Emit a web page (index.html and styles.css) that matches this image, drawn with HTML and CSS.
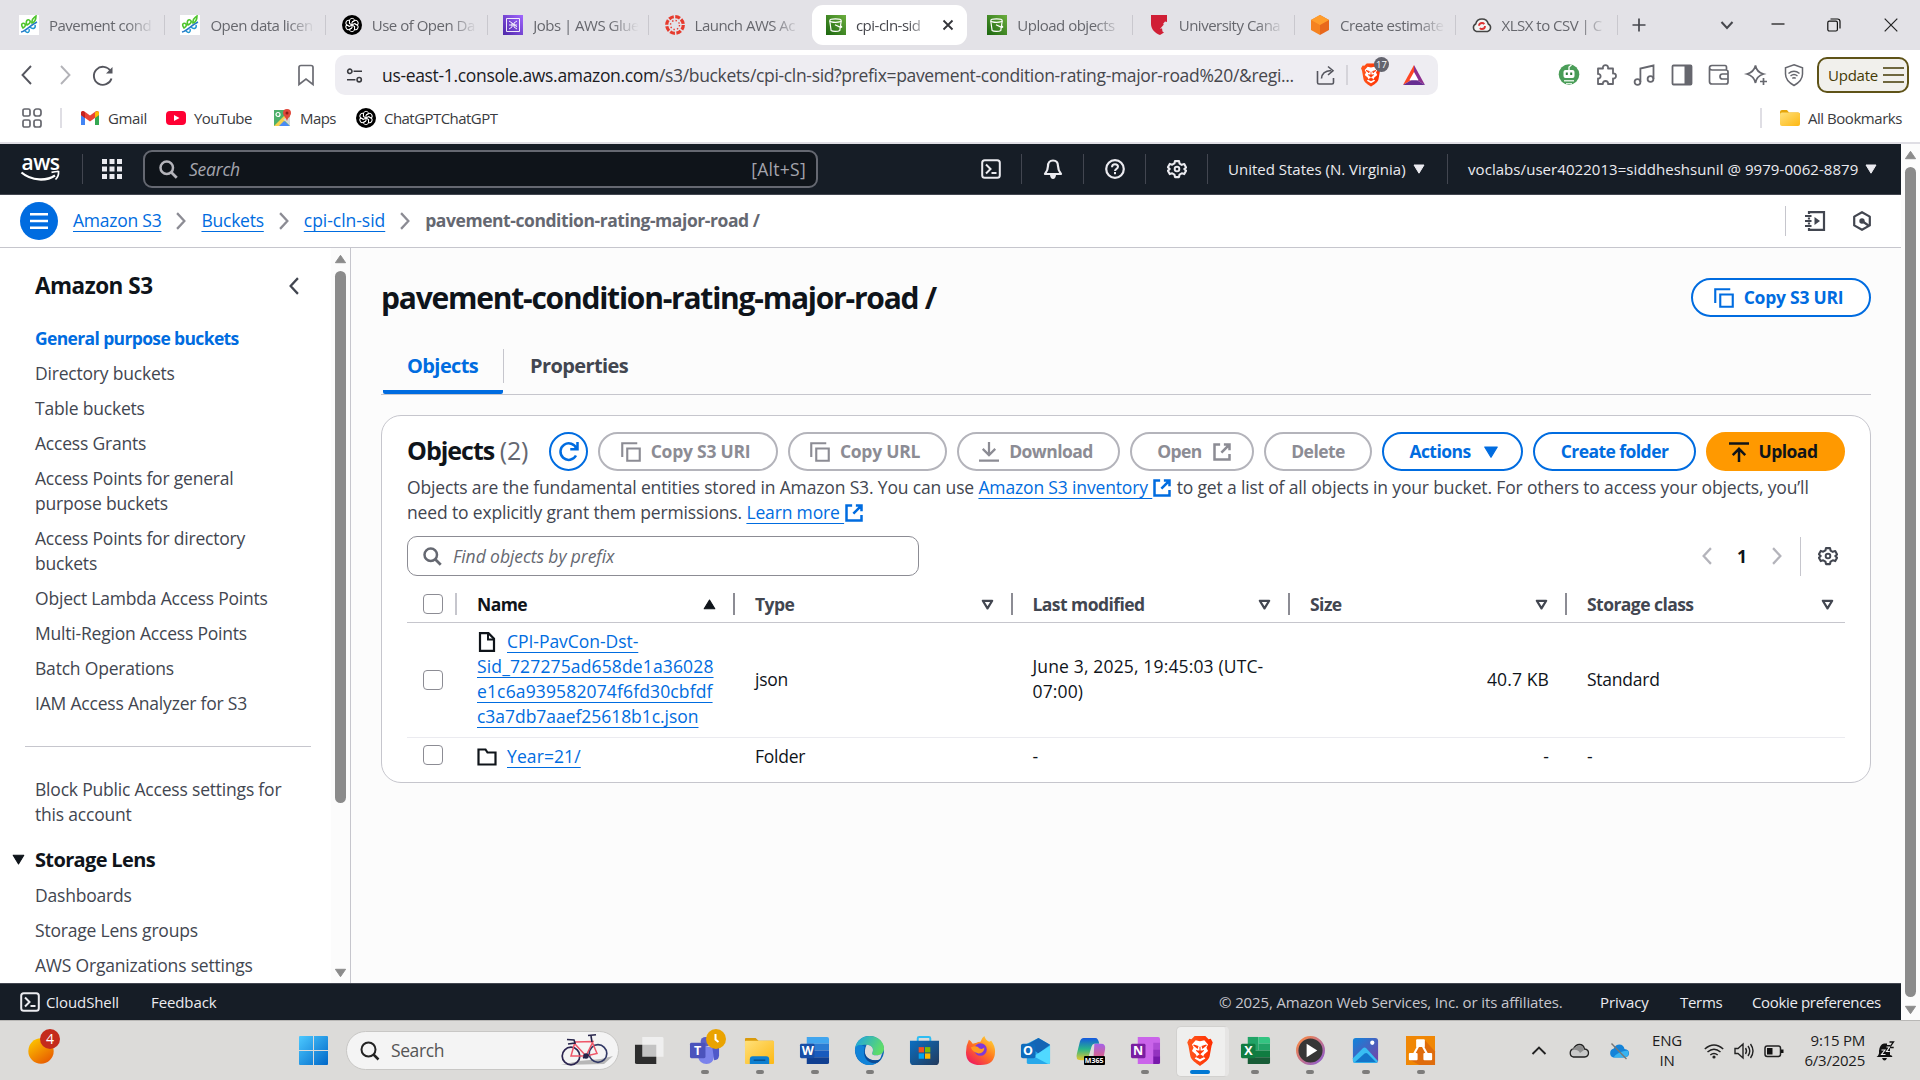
FILE: index.html
```html
<!DOCTYPE html>
<html lang="en">
<head>
<meta charset="utf-8">
<title>cpi-cln-sid - S3 bucket</title>
<link rel="stylesheet" href="styles.css">
</head>
<body>
<svg class="defs" width="0" height="0">
  <defs>
    <linearGradient id="g-green" x1="0" y1="1" x2="1" y2="0"><stop offset="0" stop-color="#1b660f"/><stop offset="1" stop-color="#6cae3e"/></linearGradient>
    <linearGradient id="g-purple" x1="0" y1="1" x2="1" y2="0"><stop offset="0" stop-color="#4d27a8"/><stop offset="1" stop-color="#a166ff"/></linearGradient>
    <linearGradient id="g-win" x1="0" y1="0" x2="1" y2="1"><stop offset="0" stop-color="#4cc9ff"/><stop offset="1" stop-color="#0067c8"/></linearGradient>
    <linearGradient id="g-sun" x1="0" y1="0" x2=".7" y2="1"><stop offset="0" stop-color="#ffd000"/><stop offset="1" stop-color="#e85c00"/></linearGradient>
    <linearGradient id="g-edge" x1="0" y1="0" x2="1" y2=".4"><stop offset="0" stop-color="#1aa0e8"/><stop offset="1" stop-color="#5fdc6a"/></linearGradient>
    <linearGradient id="g-fox" x1="1" y1="0" x2=".2" y2="1"><stop offset="0" stop-color="#ffe83a"/><stop offset=".5" stop-color="#ff7a1e"/><stop offset="1" stop-color="#f0185e"/></linearGradient>
    <linearGradient id="g-cop" x1="0" y1="0" x2="0" y2="1"><stop offset="0" stop-color="#1457e0"/><stop offset=".5" stop-color="#28b48a"/><stop offset="1" stop-color="#e8c92c"/></linearGradient>
    <linearGradient id="g-cop2" x1="0" y1="0" x2="0" y2="1"><stop offset="0" stop-color="#a561e8"/><stop offset="1" stop-color="#f5655a"/></linearGradient>
    <linearGradient id="g-bag" x1="0" y1="0" x2="1" y2="1"><stop offset="0" stop-color="#0b6fc2"/><stop offset="1" stop-color="#223a5c"/></linearGradient>
    <linearGradient id="g-folder" x1="0" y1="0" x2="1" y2="1"><stop offset="0" stop-color="#ffe07a"/><stop offset="1" stop-color="#fdb813"/></linearGradient>
    <linearGradient id="g-photo" x1="0" y1="0" x2="1" y2="1"><stop offset="0" stop-color="#0f86dc"/><stop offset="1" stop-color="#7b3fa4"/></linearGradient>
    <linearGradient id="g-ring" x1="0" y1="0" x2="1" y2="1"><stop offset="0" stop-color="#ff8a3c"/><stop offset="1" stop-color="#8a5ad6"/></linearGradient>
    <linearGradient id="g-brave" x1="0" y1="0" x2="1" y2="0"><stop offset="0" stop-color="#ff5a1f"/><stop offset="1" stop-color="#ff2d00"/></linearGradient>
  </defs>
  <symbol id="copy" viewBox="0 0 16 16"><path d="M1 12V1h12M5 5.200h10V15H5z" fill="none" stroke="currentColor" stroke-width="1.700"/></symbol>
  <symbol id="ext" viewBox="0 0 16 16"><path d="M6.500 2H2v12h12V9.500M9.500 2H14v4.500M14 2 7.500 8.500" fill="none" stroke="currentColor" stroke-width="2"/></symbol>
  <symbol id="search" viewBox="0 0 16 16"><circle cx="7" cy="7" r="5" fill="none" stroke="currentColor" stroke-width="2"/><path d="m10.600 10.600 4.400 4.400" stroke="currentColor" stroke-width="2.200"/></symbol>
  <symbol id="right" viewBox="0 0 16 16"><path d="m4.500 1 6.500 7-6.500 7" fill="none" stroke="currentColor" stroke-width="2"/></symbol>
  <symbol id="left" viewBox="0 0 16 16"><path d="M11.500 1 5 8l6.500 7" fill="none" stroke="currentColor" stroke-width="2"/></symbol>
  <symbol id="down" viewBox="0 0 16 16"><path d="M3 4h10L8 12.200z" fill="currentColor" stroke="currentColor" stroke-linejoin="round"/></symbol>
  <symbol id="up" viewBox="0 0 16 16"><path d="M3 12h10L8 3.800z" fill="currentColor" stroke="currentColor" stroke-linejoin="round"/></symbol>
  <symbol id="sort" viewBox="0 0 16 16"><path d="M3.600 4.500h8.800L8 11.700z" fill="none" stroke="currentColor" stroke-width="2.100" stroke-linejoin="round"/></symbol>
  <symbol id="gear" viewBox="0 0 24 24"><path d="M9.600 2.500h4.800l.7 3 2.600 1.500 3-.9 2.200 4-2.100 1.900 2.100 2.100-2.200 4-3-.9-2.600 1.500-.7 3H9.600l-.7-3-2.600-1.500-3 .9-2.200-4L3.200 12 1.100 9.900l2.200-4 3 .9 2.600-1.500z" fill="none" stroke="currentColor" stroke-width="2.500" stroke-linejoin="round"/><circle cx="12" cy="12" r="2.800" fill="none" stroke="currentColor" stroke-width="2.300"/></symbol>
  <symbol id="shell" viewBox="0 0 20 20"><rect x="1.200" y="1.200" width="17.600" height="17.600" rx="2.500" fill="none" stroke="currentColor" stroke-width="2"/><path d="m5 5.500 4.500 4.500L5 14.500M10.500 14h5" fill="none" stroke="currentColor" stroke-width="2"/></symbol>
  <symbol id="bucket" viewBox="0 0 20 20"><path fill="url(#g-green)" d="M0 0h20v20H0z"/><ellipse cx="9.500" cy="5.600" rx="5.700" ry="1.700" fill="none" stroke="#fff" stroke-width="1.200"/><path d="m3.800 6 1.300 9.500c1.500 1.300 7 1.300 8.700 0L15.200 6M9 9.800l5.500 2.500c1.800.3 1.400-1.100-.1-1.800" fill="none" stroke="#fff" stroke-width="1.200"/></symbol>
  <symbol id="leaf" viewBox="0 0 20 20"><path fill="#fff" d="M0 0h20v20H0z"/><path d="M2 17c5-1 8-6 16-10" fill="none" stroke="#2579c8" stroke-width="1.500"/><path d="M4 13c-3-4 0-6 2-4 1 2 0 3-2 4zM8 10C6 6 9 3 11 6c1 2-1 3-3 4zM13 8c-1-4 2-5 4-7 0 4-1 6-4 7z" fill="none" stroke="#4fc52d" stroke-width="1.600"/><path d="M6 16c3 3 5 1 4-2M11 12c3 3 6 1 5-2" fill="none" stroke="#1f95d0" stroke-width="1.500"/></symbol>
  <symbol id="gpt" viewBox="0 0 20 20"><circle cx="10" cy="10" r="10"/><g fill="none" stroke="#fff" stroke-width="1"><path id="petal" d="M7.500 8.500V5.800c0-3 4.600-3.300 5.200-.3L10 7v3"/><use href="#petal" transform="rotate(60 10 10)"/><use href="#petal" transform="rotate(120 10 10)"/><use href="#petal" transform="rotate(180 10 10)"/><use href="#petal" transform="rotate(240 10 10)"/><use href="#petal" transform="rotate(300 10 10)"/></g></symbol>
  <symbol id="lion" viewBox="0 0 24 28"><path d="m7 0-3 3-2-.5L0 6l1.200 3L3 19c1 4 5 6 9 9 4-3 8-5 9-9l1.800-10L24 6l-2-3.500-2 .5-3-3z" fill="url(#g-brave)"/><path d="M12 5 8 4 4.500 8 6 11l-1.500 3 3.500 3 1 2-2 2 5 3 5-3-2-2 1-2 3.500-3-1.500-3 1.500-3L16 4z" fill="#fff"/><path d="m6 8.500 4 1.200-.5 1.600zM18 8.500l-4 1.200.5 1.600zM12 10v5M8.500 13.500l3.500 3 3.500-3M9 19.500l3-2 3 2-3 1.500z" fill="#ff3c0a" stroke="#ff3c0a" stroke-width="1"/></symbol>
</svg>

<header class="tabstrip">
  <div class="tab"><svg class="fav"><use href="#leaf"/></svg><span class="tab-label">Pavement cond</span></div>
  <div class="tab"><svg class="fav"><use href="#leaf"/></svg><span class="tab-label">Open data licen</span></div>
  <div class="tab"><svg class="fav"><use href="#gpt"/></svg><span class="tab-label">Use of Open Da</span></div>
  <div class="tab"><svg class="fav" viewBox="0 0 20 20"><path fill="url(#g-purple)" d="M0 0h20v20H0z"/><path d="M3.500 3.500h13v13h-13zM6 6l3 2v4l-3 2M14 6l-3 2v4l3 2M9 8l5 4M6 10h8" fill="none" stroke="#fff" stroke-width=".9"/></svg><span class="tab-label">Jobs | AWS Glue</span></div>
  <div class="tab no-sep"><svg class="fav" viewBox="0 0 20 20"><circle cx="10" cy="10" r="8.300" fill="none" stroke="#e63b2e" stroke-width="3.200" stroke-dasharray="5 1.520" /><circle cx="10" cy="10" r="4.500" fill="none" stroke="#e63b2e" stroke-width="1.400" stroke-dasharray="1.400 2.134"/></svg><span class="tab-label">Launch AWS Ac</span></div>
  <div class="tab active"><svg class="fav"><use href="#bucket"/></svg><span class="tab-label">cpi-cln-sid</span><svg class="tab-close" viewBox="0 0 12 12"><path d="m1.500 1.500 9 9m0-9-9 9" stroke="#333439" stroke-width="1.800"/></svg></div>
  <div class="tab"><svg class="fav"><use href="#bucket"/></svg><span class="tab-label">Upload objects</span></div>
  <div class="tab"><svg class="fav" viewBox="0 0 20 20"><path d="M2 0h16v7l-2-.5-2 2.500 1.500 1-2.500 3 .5 3.500 1.500 1-4 2.500C6 18 2 14 2 9z" fill="#d01f36"/><path d="m11 14 6-7 2 4z" fill="#e3e2e7"/></svg><span class="tab-label">University Cana</span></div>
  <div class="tab"><svg class="fav" viewBox="0 0 20 20"><path d="M10 0 1 5v10l9 5z" fill="#f58220"/><path d="m10 0 9 5v10l-9 5z" fill="#e8681c"/><path d="m10 0 9 5-9 5-9-5z" fill="#ff9d2c"/></svg><span class="tab-label">Create estimate</span></div>
  <div class="tab"><svg class="fav" viewBox="0 0 20 20"><path d="M4.500 16.500a4 4 0 0 1-.8-7.500 6.500 6.500 0 0 1 12.600 0 4 4 0 0 1-.8 7.500z" fill="#f4f4f4" stroke="#444" stroke-width="1.500"/><circle cx="10" cy="11" r="3" fill="none" stroke="#d33" stroke-width="1.800" stroke-dasharray="7 2.400"/></svg><span class="tab-label">XLSX to CSV | C</span></div>
  <svg class="newtab" viewBox="0 0 14 14"><path d="M7 .5v13M.5 7h13" stroke="#46474d" stroke-width="1.700"/></svg>
  <div class="winctl">
    <svg class="w14" viewBox="0 0 14 14"><path d="m1.500 4 5.500 6 5.500-6" fill="none" stroke="#46474d" stroke-width="2"/></svg>
    <svg class="w14" viewBox="0 0 14 14"><path d="M.5 6h13" stroke="#111" stroke-width="1.200"/></svg>
    <svg class="w14" viewBox="0 0 14 14"><rect x=".8" y="3.200" width="9.600" height="9.800" rx="1.500" fill="none" stroke="#111" stroke-width="1.200"/><path d="M3.500 1h7c1.600 0 2.500 1 2.500 2.500v7" fill="none" stroke="#111" stroke-width="1.200"/></svg>
    <svg class="w14" viewBox="0 0 14 14"><path d="m.7.7 12.600 12.600m0-12.600L.7 13.300" stroke="#222" stroke-width="1.200"/></svg>
  </div>
</header>

<div class="toolbar">
  <div class="nav">
    <svg viewBox="0 0 22 22"><path d="m15 2-8.500 9 8.500 9" fill="none" stroke="#55565e" stroke-width="1.900"/></svg>
    <svg viewBox="0 0 22 22"><path d="m7 2 8.500 9L7 20" fill="none" stroke="#b3b3b8" stroke-width="1.900"/></svg>
    <svg viewBox="0 0 22 22"><path d="M18.500 7A9 9 0 1 0 19.500 14.500" fill="none" stroke="#55565e" stroke-width="1.900"/><path d="M20.500 3v6.500H14z" fill="#55565e"/></svg>
    <svg class="bm" viewBox="0 0 22 22"><path d="M4 3.500Q4 1.500 6 1.500h10q2 0 2 2v17l-7-5.500-7 5.500z" fill="none" stroke="#6b6c73" stroke-width="1.700"/></svg>
  </div>
  <div class="omni">
    <svg class="tune" viewBox="0 0 18 16"><g fill="none" stroke="#3a3b40" stroke-width="1.700"><circle cx="4" cy="3.500" r="2.300"/><circle cx="14" cy="12.500" r="2.300"/><path d="M8 3.500h9M1 12.500h9"/></g></svg>
    <span class="url"><b>us-east-1.console.aws.amazon.com</b>/s3/buckets/cpi-cln-sid?prefix=pavement-condition-rating-major-road%20/&amp;regi...</span>
    <svg class="share" viewBox="0 0 20 20"><path d="M1.500 6v11.500q0 1.500 1.500 1.500h13q1.500 0 1.500-1.500V13M5.500 13.500Q6 6 15 5.500M12 1.500l5 4.200-5 4.300" fill="none" stroke="#55565e" stroke-width="1.600"/></svg>
    <i class="omni-sep"></i>
    <span class="shield"><svg viewBox="0 0 24 28"><use href="#lion"/></svg><em>17</em></span>
    <svg class="bat" viewBox="0 0 22 20"><path d="M11 0 0 20l11-6.500z" fill="#ff4724"/><path d="m11 0 11 20-11-6.500z" fill="#8d2f8e"/><path d="M0 20h22l-11-6.500z" fill="#662d91"/><path d="m11 7 4.600 8.300H6.400z" fill="#fff"/></svg>
  </div>
  <div class="ext">
    <svg viewBox="0 0 22 22"><circle cx="11" cy="10.500" r="10.300" fill="#4a9d58"/><path d="M11 6V3l2.500-2" stroke="#fff" stroke-width="1.300" fill="none"/><rect x="5.500" y="6" width="11" height="8" rx="2" fill="#fff"/><path d="M7.800 8.500h2v2.500h-2zM12.200 8.500h2v2.500h-2z" fill="#2e7d3c"/><path d="M6 16h10v1.500H6zM8 19h6v1H8z" fill="#d9eedc"/></svg>
    <svg viewBox="0 0 22 22"><path d="M3 4.500h5c-1-4.500 6-4.500 5 0h5v5c4-.8 4 5.500 0 5V20h-5c1-4-6-4-5 0H3v-5.500c3.500.5 3.500-5 0-4.500z" fill="none" stroke="#66676e" stroke-width="1.800" stroke-linejoin="round"/></svg>
    <svg viewBox="0 0 22 22"><g fill="none" stroke="#66676e" stroke-width="1.800"><circle cx="4.500" cy="18" r="2.900"/><circle cx="17.500" cy="15" r="2.900"/><path d="M7.400 18V4.500L20.500 1.500V15"/></g></svg>
    <svg viewBox="0 0 22 22"><rect x="1.500" y="1.500" width="19" height="19" rx="1" fill="none" stroke="#66676e" stroke-width="1.800"/><path d="M13.500 1.500h7v19h-7z" fill="#66676e"/></svg>
    <svg viewBox="0 0 22 22"><path d="M1.500 4v13.500q0 2.500 2.500 2.500h14q2 0 2-2V8q0-2-2-2H4Q1.500 6 1.500 3.800T4 1.500h13q1.500 0 1.500 2V6M20 10h-5.500q-2.500 0-2.500 2.500t2.500 2.500H20" fill="none" stroke="#66676e" stroke-width="1.700"/></svg>
    <svg viewBox="0 0 22 22"><path d="M9.500 1.500q1 6.500 8 8.500-7 2-8 9-1.500-7-8.500-9 7-2 8.500-8.500zM17.500 14v7M14 17.500h7" fill="none" stroke="#66676e" stroke-width="1.700"/></svg>
    <svg viewBox="0 0 22 22"><path d="m11 .8 8.500 3V10c0 6-4 9-8.500 11.500C6.500 19 2.500 16 2.500 10V3.800z" fill="none" stroke="#66676e" stroke-width="1.500"/><path d="M5.500 9.500q5.500-4.500 11 0M7.500 12q3.500-2.800 7 0M9.300 14.300q1.700-1.200 3.400 0" fill="none" stroke="#66676e" stroke-width="1.500"/></svg>
  </div>
  <button class="update">Update<svg viewBox="0 0 21 16"><path d="M0 1h21M0 8h21M0 15h21" stroke="#443a05" stroke-width="1.700"/></svg></button>
</div>

<div class="bookmarks">
  <svg class="apps" viewBox="0 0 20 20"><g fill="none" stroke="#66676e" stroke-width="1.700"><rect x="1" y="1" width="7" height="7" rx="1.600"/><rect x="12" y="1" width="7" height="7" rx="2.500"/><rect x="1" y="12" width="7" height="7" rx="1.600"/><rect x="12" y="12" width="7" height="7" rx="2"/></g></svg>
  <i class="bsep"></i>
  <a class="bk gmail"><svg viewBox="0 0 20 20"><path d="M1 17V5l4 3v9z" fill="#4285f4"/><path d="M15 17V8l4-3v12z" fill="#34a853"/><path d="M1 5c0-2 2-2.500 3.500-1.500L10 7.500l5.500-4C17 2.500 19 3 19 5v2l-9 6.500L1 7z" fill="#ea4335"/><path d="M1 7V5c0-1 .8-2 2-2l2 1.500V10z" fill="#c5221f"/><path d="M15 10V4.500L17 3c1 0 2 1 2 2v2z" fill="#fbbc04"/></svg>Gmail</a>
  <a class="bk yt"><svg viewBox="0 0 20 20"><rect y="3" width="20" height="14" rx="4" fill="#f03"/><path d="m8 7 5.500 3L8 13z" fill="#fff"/></svg>YouTube</a>
  <a class="bk maps"><svg viewBox="0 0 20 20"><path d="M2 2h16v16H2z" fill="#4caf6a"/><path d="M2 18 15 5h3v3L8 18z" fill="#f6d04d"/><path d="M7 18l5-5 6 5z" fill="#4a8af4"/><path d="m11 11 7 7V9z" fill="#d8d8d8"/><path d="M15 1a4 4 0 0 1 4 4c0 3-3 4-4 8-1-4-4-5-4-8a4 4 0 0 1 4-4z" fill="#e1483b"/><circle cx="15" cy="5" r="1.500" fill="#8b1f17"/><circle cx="6" cy="6.500" r="2" fill="none" stroke="#fff" stroke-width="1.200"/></svg>Maps</a>
  <a class="bk"><svg><use href="#gpt"/></svg>ChatGPTChatGPT</a>
  <a class="bk all"><i class="bsep"></i><svg viewBox="0 0 20 20"><path d="M0 4q0-2 2-2h5l2 2.500h9q2 0 2 2V10H0z" fill="#e5a50a"/><rect y="4.500" width="20" height="13.500" rx="2" fill="url(#g-folder)"/></svg>All Bookmarks</a>
</div>

<div class="viewport">
  <div class="console">
    <div class="awsbar">
      <div class="logo"><span>aws</span><svg viewBox="0 0 39 12"><path d="M.5 2.500C11 11.500 26 11 34 5.500" fill="none" stroke="#fff" stroke-width="2.300"/><path d="M30.500 2.300q8-1.500 7-.3.500 4-3 7.500" fill="none" stroke="#fff" stroke-width="1.700"/></svg></div>
      <i class="vsep"></i>
      <svg class="grid9" viewBox="0 0 20 20"><path d="M0 0h5v5H0zM7.500 0h5v5h-5zM15 0h5v5h-5zM0 7.500h5v5H0zM7.500 7.500h5v5h-5zM15 7.500h5v5h-5zM0 15h5v5H0zM7.500 15h5v5h-5zM15 15h5v5h-5z" fill="#ebebf0"/></svg>
      <div class="gsearch"><svg><use href="#search"/></svg><em>Search</em><span>[Alt+S]</span></div>
      <div class="aws-icons">
        <span><svg><use href="#shell"/></svg></span><i class="vsep"></i>
        <span><svg viewBox="0 0 20 20"><path d="M10 1.500c3.500 0 5 2.500 5 5.500 0 4 1 5.500 3 8H2c2-2.500 3-4 3-8 0-3 1.500-5.500 5-5.500z" fill="none" stroke="currentColor" stroke-width="2.200" stroke-linejoin="round"/><path d="M7 16h6q-.5 4-3 4t-3-4z" fill="currentColor"/></svg></span><i class="vsep"></i>
        <span><svg viewBox="0 0 20 20"><circle cx="10" cy="10" r="8.800" fill="none" stroke="currentColor" stroke-width="2.200"/><path d="M7 8.300q0-3 3-3t3 2.500c0 2.200-3 2-3 4.200M10 13v2.300" fill="none" stroke="currentColor" stroke-width="2"/></svg></span><i class="vsep"></i>
        <span><svg><use href="#gear"/></svg></span><i class="vsep"></i>
      </div>
      <div class="region">United States (N. Virginia)<svg><use href="#down"/></svg></div>
      <i class="vsep"></i>
      <div class="account">voclabs/user4022013=siddheshsunil @ 9979-0062-8879<svg><use href="#down"/></svg></div>
    </div>

    <nav class="crumbs">
      <span class="burger"><svg viewBox="0 0 18 16"><path d="M0 1.200h18M0 8h18M0 14.800h18" stroke="#fff" stroke-width="2.400"/></svg></span>
      <a class="link">Amazon S3</a><svg class="chev"><use href="#right"/></svg>
      <a class="link">Buckets</a><svg class="chev"><use href="#right"/></svg>
      <a class="link bucket-name">cpi-cln-sid</a><svg class="chev"><use href="#right"/></svg>
      <b>pavement-condition-rating-major-road /</b>
      <div class="crumb-tools"><i></i>
        <svg viewBox="0 0 20 20"><path d="M4 3V1.200h15v17.600H4V17M4 6.500v2M4 11.500v2" fill="none" stroke="currentColor" stroke-width="2.200"/><path d="M0 5h6.500M0 10h6.500M0 15h6.500" stroke="currentColor" stroke-width="2"/><path d="m9.500 6 5.500 4-5.500 4z" fill="currentColor"/></svg>
        <svg viewBox="0 0 20 20"><path d="m10 1.200 7.800 4.400v8.800L10 18.800l-7.800-4.400V5.600z" fill="none" stroke="currentColor" stroke-width="2.200" stroke-linejoin="round"/><circle cx="10" cy="10" r="2.700" fill="currentColor"/><path d="m10 10 6.500 4.500" stroke="currentColor" stroke-width="2.200"/></svg>
      </div>
    </nav>

    <div class="body">
      <aside class="side">
        <div class="side-list">
          <div class="side-head"><h2>Amazon S3</h2><svg><use href="#left"/></svg></div>
          <ul>
            <li class="on">General purpose buckets</li>
            <li>Directory buckets</li>
            <li>Table buckets</li>
            <li>Access Grants</li>
            <li>Access Points for general<br>purpose buckets</li>
            <li>Access Points for directory<br>buckets</li>
            <li>Object Lambda Access Points</li>
            <li>Multi-Region Access Points</li>
            <li>Batch Operations</li>
            <li>IAM Access Analyzer for S3</li>
          </ul>
          <hr>
          <ul class="ul2"><li>Block Public Access settings for<br>this account</li></ul>
          <h3><svg><use href="#down"/></svg>Storage Lens</h3>
          <ul class="ul3">
            <li>Dashboards</li>
            <li>Storage Lens groups</li>
            <li>AWS Organizations settings</li>
          </ul>
        </div>
        <div class="sbar"><svg viewBox="0 0 14 10"><path d="m7 1 5.500 8h-11z" fill="#8b8b8b" stroke="#8b8b8b" stroke-linejoin="round"/></svg><i class="side-thumb"></i><svg viewBox="0 0 14 10"><path d="m7 9 5.500-8h-11z" fill="#8b8b8b" stroke="#8b8b8b" stroke-linejoin="round"/></svg></div>
      </aside>

      <main class="main">
        <div class="title"><h1>pavement-condition-rating-major-road /</h1><button class="btn lead wide w180"><svg><use href="#copy"/></svg>Copy S3 URI</button></div>
        <div class="tabs"><span class="t on">Objects</span><i></i><span class="t">Properties</span></div>
        <section class="card">
          <div class="actions">
            <h2>Objects <small>(2)</small></h2>
            <button class="btn round"><svg viewBox="0 0 16 16"><path d="M13.600 10.800A6.600 6.600 0 1 1 14 5.500M14.800 0v5.800H9" fill="none" stroke="currentColor" stroke-width="2"/></svg></button>
            <button class="btn off lead wide w180"><svg><use href="#copy"/></svg>Copy S3 URI</button>
            <button class="btn off lead wide w159"><svg><use href="#copy"/></svg>Copy URL</button>
            <button class="btn off lead w163"><svg viewBox="0 0 16 16"><path d="M8 0v10.500M3 5.500l5 5 5-5M0 14.800h16" fill="none" stroke="currentColor" stroke-width="1.800"/></svg>Download</button>
            <button class="btn off trail w124">Open<svg><use href="#ext"/></svg></button>
            <button class="btn off w108">Delete</button>
            <button class="btn trail w141">Actions<svg><use href="#down"/></svg></button>
            <button class="btn w163">Create folder</button>
            <button class="btn lead primary w139"><svg viewBox="0 0 16 16"><path d="M0 1.200h16M8 16V5.500M3 10.500l5-5 5 5" fill="none" stroke="currentColor" stroke-width="2"/></svg>Upload</button>
          </div>
          <p class="desc">Objects are the fundamental entities stored in Amazon S3. You can use <a class="link">Amazon S3 inventory </a><svg><use href="#ext"/></svg> to get a list of all objects in your bucket. For others to access your objects, you’ll<br>need to explicitly grant them permissions. <a class="link">Learn more </a><svg><use href="#ext"/></svg></p>
          <div class="filter">
            <div class="find"><svg><use href="#search"/></svg><em>Find objects by prefix</em></div>
            <div class="pager"><svg><use href="#left"/></svg><b>1</b><svg><use href="#right"/></svg><i></i><svg class="prefs"><use href="#gear"/></svg></div>
          </div>
          <div class="table">
            <div class="tr th">
              <div class="c chk"><i class="box"></i></div>
              <div class="c sorted">Name<svg><use href="#up"/></svg></div>
              <div class="c">Type<svg><use href="#sort"/></svg></div>
              <div class="c">Last modified<svg><use href="#sort"/></svg></div>
              <div class="c">Size<svg><use href="#sort"/></svg></div>
              <div class="c last">Storage class<svg><use href="#sort"/></svg></div>
            </div>
            <div class="tr r1">
              <div class="c chk"><i class="box"></i></div>
              <div class="c"><div class="name"><svg class="ico" viewBox="0 0 20 20"><path d="M3 1.200h8.500L17 6.700v12.100H3z" fill="none" stroke="#0f141a" stroke-width="2.200"/><path d="M11 1v6.500h6" fill="none" stroke="#0f141a" stroke-width="2"/></svg><a class="link">CPI-PavCon-Dst-<br><span class="hash">Sid_727275ad658de1a36028<br>e1c6a939582074f6fd30cbfdf</span><br>c3a7db7aaef25618b1c.json</a></div></div>
              <div class="c">json</div>
              <div class="c date">June 3, 2025, 19:45:03 (UTC-<br>07:00)</div>
              <div class="c num">40.7 KB</div>
              <div class="c">Standard</div>
            </div>
            <div class="tr r2">
              <div class="c chk"><i class="box"></i></div>
              <div class="c"><div class="name"><svg class="ico" viewBox="0 0 20 20"><path d="M1.500 2.500h7l2 3h8v12h-17z" fill="none" stroke="#0f141a" stroke-width="2.200"/></svg><a class="link year">Year=21/</a></div></div>
              <div class="c">Folder</div>
              <div class="c">-</div>
              <div class="c num">-</div>
              <div class="c">-</div>
            </div>
          </div>
        </section>
      </main>
    </div>

    <footer class="foot">
      <svg><use href="#shell"/></svg><span class="f1">CloudShell</span><span>Feedback</span>
      <span class="copyr">© 2025, Amazon Web Services, Inc. or its affiliates.</span><span class="f2">Privacy</span><span class="f3">Terms</span><span class="f4">Cookie preferences</span>
    </footer>
  </div>
  <div class="sbar page"><svg viewBox="0 0 14 10"><path d="m7 1 5.500 8h-11z" fill="#8b8b8b" stroke="#8b8b8b" stroke-linejoin="round"/></svg><i class="page-thumb"></i><svg viewBox="0 0 14 10"><path d="m7 9 5.500-8h-11z" fill="#8b8b8b" stroke="#8b8b8b" stroke-linejoin="round"/></svg></div>
</div>

<div class="taskbar">
  <div class="widgets"><svg viewBox="0 0 26 26"><circle cx="13" cy="13" r="12.700" fill="url(#g-sun)"/></svg><em>4</em></div>
  <svg class="win" viewBox="0 0 29 29"><path d="M1 0h13v14H0V1q0-1 1-1zM15 0h13q1 0 1 1v13H15zM0 15h14v14H1q-1 0-1-1zM15 15h14v13q0 1-1 1H15z" fill="url(#g-win)"/></svg>
  <div class="wsearch"><svg class="mag" viewBox="0 0 20 20"><circle cx="8.500" cy="8.500" r="7" fill="none" stroke="#222" stroke-width="2"/><path d="m13.500 13.500 5 5" stroke="#222" stroke-width="2.500"/></svg><span>Search</span>
    <svg class="bike" viewBox="0 0 52 34"><path d="m0 31 18-4 22-2 12-3-9 8z" fill="#9c9c9c" opacity=".7"/><g fill="none"><circle cx="10" cy="22" r="8.800" stroke="#2b2450" stroke-width="1.700"/><circle cx="37" cy="19.500" r="8.800" stroke="#333a66" stroke-width="1.700"/><path d="m10 22 4-14 18-.5L25 22zm4-12 11 12 11-2.500-5-12" stroke="#ef5668" stroke-width="1.500"/><path d="M6 5.500 13 6l1 3-7 1M27 1.500l8-.8M30 2l1 6M22 24l6-3" stroke="#26244a" stroke-width="1.600"/></g><circle cx="25" cy="22" r="2.800" fill="#26244a"/></svg></div>
  <div class="pins">
    <span><svg viewBox="0 0 32 32"><path d="M1 10h22v20H3q-2 0-2-2z" fill="#2d2d2d"/><path d="M8.500 2H29q1.500 0 1.500 1.500v19H8.500z" fill="#f6f6f6" opacity=".75"/></svg></span>
    <span class="run teams"><svg viewBox="0 0 32 32"><circle cx="17" cy="7" r="5" fill="#5b5fc7"/><path d="M9 12h17v10q-1 8-8 8t-9-8z" fill="#7b83eb"/><path d="M24 12h7v9q0 5-5 5z" fill="#5059c9"/><rect x="1" y="8" width="16" height="16" rx="1.500" fill="#4b53bc"/></svg><b>T</b><em><svg viewBox="0 0 20 20"><circle cx="10" cy="10" r="10" fill="#eaa300"/><path d="M9.500 5v5.500l3 2.500" fill="none" stroke="#fff" stroke-width="2"/></svg></em></span>
    <span class="run"><svg viewBox="0 0 32 32"><path d="M1 4q0-1 1-1h10l3 3h15v6H1z" fill="#d99a0b"/><rect x="1" y="6" width="30" height="24" rx="1" fill="url(#g-folder)"/><path d="M6 30v-5q0-3 3-3h14q3 0 3 3v5z" fill="#0d7fd0"/><path d="M10 26h12" stroke="#064f8e" stroke-width="1.500"/></svg></span>
    <span class="run word"><svg viewBox="0 0 32 32"><path d="M8 2h21q2 0 2 2v5H8z" fill="#41a5ee"/><path d="M8 9h23v7H8z" fill="#2b7cd3"/><path d="M8 16h23v7H8z" fill="#185abd"/><path d="M8 23h23v5q0 2-2 2H8z" fill="#103f91"/><rect x="1" y="9" width="15" height="15" rx="1.500" fill="#174ea6"/></svg><b>W</b></span>
    <span class="run"><svg viewBox="0 0 32 32"><circle cx="16" cy="16" r="15" fill="#0b63b6"/><path d="M1 15C2 5 9 1 16 1c9 0 15 6 15 13 0 5-4 7-8 7-3 0-5-1-4-3 2-4-1-8-6-8-6 0-11 2-12 5z" fill="url(#g-edge)"/><path d="M13 10c5 0 8 4 6 8-1 2 1 3 4 3 2 0 5-.6 6.500-3-2 3-1 10-9.500 9C12 26 9 18 13 10z" fill="#dcdbd9"/><path d="M11 12c-3 8 3 17 17 13-3 4-8 6-12 6C7 31 2 24 1 16c0-6 6-7 10-4z" fill="#1183d8"/><path d="M11 13c-2 9 6 16 17 12l-3 3c-9 4-17-4-14-15z" fill="#0a4a94"/></svg></span>
    <span><svg viewBox="0 0 32 32"><path d="M9 7V3.500Q9 2 10.500 2h10Q22 2 22 3.500V7" fill="none" stroke="#2fbdf2" stroke-width="2"/><path d="M1 6h30v21q0 4-4 4H5q-4 0-4-4z" fill="url(#g-bag)"/><path d="M10 12.500h5.500V18H10z" fill="#f25022"/><path d="M16.500 12.500H22V18h-5.500z" fill="#7fba00"/><path d="M10 19h5.500v5.500H10z" fill="#00a4ef"/><path d="M16.500 19H22v5.500h-5.500z" fill="#ffb900"/></svg></span>
    <span><svg viewBox="0 0 32 32"><path d="M4 5q2 1 4 4l4-1q1-1 4-1 1-4 4-6 1 4 5 6l2-1q4 5 4 11 0 14-15 14T1 18Q1 11 4 5z" fill="url(#g-fox)"/><circle cx="16" cy="15" r="6.500" fill="#8038d8"/><path d="M6 13q6-3 9 1 3 1 5-1 0 6-6 6-6-1-8-6z" fill="#ff9a1f"/></svg></span>
    <span class="outlook"><svg viewBox="0 0 32 32"><path d="M7 9 19 3l12 7v18q0 2-2 2H9q-2 0-2-2z" fill="#28a8ea"/><path d="M7 10 19 3l12 7-12 9z" fill="#1465b5"/><path d="m31 11-17 11 15 8q2 0 2-2z" fill="#50d9ff"/><rect x="1" y="9" width="15" height="15" rx="2" fill="#0f6cbd"/></svg><b>O</b></span>
    <span class="copilot"><svg viewBox="0 0 32 32"><path d="M9 3h12q3 0 4 6h-5q-2 0-3 3l-4 14H6q-6 0-4-7L5 7q1-4 4-4z" fill="url(#g-cop)"/><path d="M20 9h7q5 0 4 6l-2 11q-1 4-5 4h-9q3-1 4-5z" fill="url(#g-cop2)"/></svg><em>M365</em></span>
    <span class="run note"><svg viewBox="0 0 32 32"><path d="M8 2h21q2 0 2 2v24q0 2-2 2H8z" fill="#ca64ea"/><path d="M24 8h7v7h-7z" fill="#ae4bd5"/><path d="M24 15h7v7h-7z" fill="#9332bf"/><path d="M24 22h7v6q0 2-2 2h-5z" fill="#7719aa"/><rect x="1" y="9" width="15" height="15" rx="1.500" fill="#7a1ea1"/></svg><b>N</b></span>
    <span class="run current"><svg viewBox="0 0 24 28"><use href="#lion"/></svg></span>
    <span class="run xl"><svg viewBox="0 0 32 32"><path d="M8 2h11v14H8z" fill="#21a366"/><path d="M19 2h10q2 0 2 2v5H19z" fill="#33c481"/><path d="M19 9h12v7H19z" fill="#21a366"/><path d="M8 16h23v7H8z" fill="#107c41"/><path d="M8 23h23v5q0 2-2 2H8z" fill="#185c37"/><rect x="1" y="9" width="15" height="15" rx="1.500" fill="#107c41"/></svg><b>X</b></span>
    <span class="run"><svg viewBox="0 0 32 32"><circle cx="16" cy="16" r="13.700" fill="#363636" stroke="url(#g-ring)" stroke-width="2.500"/><path d="m12 9 11 7-11 7z" fill="#fff"/></svg></span>
    <span class="run"><svg viewBox="0 0 32 32"><rect x="3" y="3" width="26" height="26" rx="3" fill="url(#g-photo)"/><path d="m3 24 10-10q2-2 4 0l12 13q-1 2-3 2H6q-3 0-3-3z" fill="#38bdf2"/><path d="m5 28 10-9q2-1 3 0l9 9z" fill="#1375c9"/><circle cx="23" cy="8" r="2.200" fill="#fff"/></svg></span>
    <span class="run"><svg viewBox="0 0 32 32"><path d="M1 1h30v30H1z" fill="#f08705"/><path d="m20 5 11 12v14H15L4 25z" fill="#df6c0c"/><path d="m15 9-7 13m9-13 7 13" stroke="#fff" stroke-width="2.200"/><rect x="11.500" y="4.500" width="9" height="8" rx="1" fill="#fff"/><rect x="4" y="18.500" width="9" height="7.500" rx="1" fill="#fff"/><rect x="19" y="18.500" width="9" height="7.500" rx="1" fill="#fff"/></svg></span>
  </div>
  <div class="tray">
    <span class="s40"><svg viewBox="0 0 20 20"><path d="m3.500 13 6.500-6.500 6.500 6.500" fill="none" stroke="#222" stroke-width="1.900"/></svg></span>
    <span class="s40"><svg viewBox="0 0 20 20"><path d="M4.500 16a4.200 4.200 0 0 1 0-8.200Q6.500 3.500 10.500 3.500q4 0 5 4.500 4 .5 4 4t-4 4z" fill="#c9c9c9" stroke="#222" stroke-width="1.300"/><path d="M3 9q6-1 8 3l4-3q-1-5-5-4.500Q6 5 3 9z" fill="#8c8c8c"/></svg></span>
    <span class="s40"><svg viewBox="0 0 20 20"><path d="M4.500 16.500a4.500 4.500 0 0 1 0-8.700Q6.500 3.500 10.500 3.500q4 0 5 4.500 4.500.5 4.500 4.300t-4.500 4.200z" fill="#1583d8"/><path d="M4.500 16.500Q9 10 19 9.500q2 6-3.500 7z" fill="#38b3f0"/><path d="m2.500 2.500 15 15.500" stroke="#777" stroke-width="1.400"/></svg></span>
    <div class="lang">ENG<br>IN</div>
    <span class="s30"><svg viewBox="0 0 20 20"><g fill="none" stroke="#222" stroke-width="1.500"><path d="M.8 8q9.200-8 18.400 0M3.500 11q6.500-5.500 13 0M6.300 14q3.700-3 7.400 0"/></g><circle cx="10" cy="16" r="1.600" fill="#222"/></svg></span>
    <span class="s30"><svg viewBox="0 0 20 20"><path d="M1 7.500h3L9 3v14l-5-4.500H1zM11.500 7q2 3 0 6M14 5q3.500 5 0 10M16.500 3q5 7 0 14" fill="none" stroke="#222" stroke-width="1.400"/></svg></span>
    <span class="s30"><svg viewBox="0 0 20 20"><rect x="1" y="5" width="15.500" height="10.500" rx="2.200" fill="none" stroke="#222" stroke-width="1.500"/><path d="M3 7h5.500v6.500H3zM17 8.500h2.500v3.500H17z" fill="#111"/></svg></span>
    <div class="clock">9:15 PM<br>6/3/2025</div>
    <span class="s40"><svg viewBox="0 0 20 20"><path d="M1.500 16q3-2 2.500-6Q4.500 3.500 9 2.500h3V4h3v10q2 0 2.500 2zM7 17h5q-1 2.500-2.500 2.500T7 17z" fill="#111"/><path d="M14.500 1h4l-4 5.500h4.200" fill="none" stroke="#111" stroke-width="1.300"/><path d="M6.500 9h3.500l-3.500 4.500h4M11.500 6h3l-3 4.500h3.300" fill="none" stroke="#eee" stroke-width="1.100"/></svg></span>
  </div>
</div>
</body>
</html>
```
FILE: styles.css
```css
* { box-sizing: border-box; }
html, body { margin: 0; height: 1080px; overflow: hidden; }
body {
  width: 1920px;
  display: flex;
  flex-direction: column;
  background: #fff;
  font-family: "Open Sans", "Noto Sans", sans-serif;
  font-size: 17.5px;
  line-height: 25px;
  letter-spacing: -0.24px;
  color: #0f141a;
}
.defs { display: block; width: 0; height: 0; flex: none; position: absolute; }
h1, h2, h3, p, ul { margin: 0; padding: 0; }
ul { list-style: none; }
svg { display: block; flex: none; overflow: visible; }
i, em { font-style: normal; }
button { font: inherit; letter-spacing: inherit; padding: 0; }

/* Browser tabs */
.tabstrip { height: 50px; flex: none; display: flex; align-items: center; background: #e3e2e7; padding-left: 3.600px; }
.tab { width: 161.400px; height: 40px; flex: none; display: flex; align-items: center; padding-left: 15.400px; font-size: 15px; letter-spacing: -0.500px; color: #66676d; }
.tab::after { content: ""; width: 1px; height: 20px; background: #c9c8ce; }
.tab.no-sep::after, .tab.active::after { display: none; }
.fav { width: 20px; height: 20px; margin-right: 10px; }
.tab-label { width: 110px; margin-right: 5px; white-space: nowrap; -webkit-mask-image: linear-gradient(90deg, #000 70%, transparent 96%); mask-image: linear-gradient(90deg, #000 70%, transparent 96%); }
.tab.active { width: 155px; margin: 0 5px 0 1.400px; padding-left: 14px; background: #fff; border-radius: 11px; color: #46474d; }
.tab.active .tab-label { width: 80px; margin-right: 6px; -webkit-mask-image: linear-gradient(90deg, #000 64%, transparent 94%); mask-image: linear-gradient(90deg, #000 64%, transparent 94%); }
.tab-close { width: 12px; height: 12px; }
.newtab { width: 14px; height: 14px; margin-left: 14px; }
.winctl { margin-left: auto; display: flex; width: 214px; }
.w14 { width: 14px; height: 14px; margin-left: 41.500px; }
.w14:first-child { margin-left: 14px; }
.w14:nth-child(2) { margin-left: 37px; }
.w14:nth-child(4) { margin-left: 43px; }

/* Address bar */
.toolbar { height: 50px; flex: none; display: flex; align-items: center; background: #fff; }
.nav { width: 335px; display: flex; padding: 0 10px 0 8px; }
.nav svg { width: 22px; height: 22px; margin: 0 8px; }
.nav .bm { margin-left: auto; }
.omni { width: 1103px; height: 40px; display: flex; align-items: center; background: #eeedf2; border-radius: 10px; padding-left: 11px; }
.tune { width: 17px; height: 15px; }
.url { width: 929px; margin-left: 19px; white-space: nowrap; color: #46474d; letter-spacing: -0.330px; line-height: 24px; }
.url b { font-weight: 400; color: #1b1b1f; }
.share { width: 20px; height: 20px; margin-left: 5px; }
.omni-sep { width: 2px; height: 20px; background: #d5d4da; margin-left: 10px; }
.shield { position: relative; margin-left: 13px; }
.shield svg { width: 20px; height: 24px; }
.shield em { position: absolute; left: 13px; top: -6px; width: 15px; height: 15px; border-radius: 8px; background: #63646e; color: #fff; font-size: 9.500px; line-height: 15px; text-align: center; letter-spacing: 0; }
.bat { width: 22px; height: 20px; margin-left: 22px; }
.ext { margin-left: auto; display: flex; }
.ext svg { width: 22px; height: 22px; margin: 0 7.790px; }
.update { width: 92px; height: 36px; margin: 0 11px 0 4px; border: 2px solid #5f5318; border-radius: 10px; background: #f1f0ec; display: flex; align-items: center; gap: 5px; padding-left: 9px; font-size: 15px; color: #443a05; }
.update svg { width: 21px; height: 16px; }

/* Bookmarks bar */
.bookmarks { height: 44px; flex: none; display: flex; align-items: center; padding: 0 18px 6px 22px; border-bottom: 2px solid #dfdee4; font-size: 15px; letter-spacing: -0.550px; color: #3a3b40; }
.apps { width: 20px; height: 20px; }
.bsep { width: 2px; height: 20px; background: #dfdee4; margin-left: 18px; }
.bk { display: flex; align-items: center; white-space: nowrap; }
.bk svg { width: 20px; height: 20px; margin-right: 8px; }
.gmail { margin-left: 18px; width: 86px; letter-spacing: -0.350px; }
.yt { width: 106px; }
.maps { width: 84px; }
.bk.all { margin-left: auto; letter-spacing: -0.450px; }
.bk.all svg { margin-left: 18px; }

/* Page area */
.viewport { height: 876px; flex: none; display: flex; }
.console { width: 1901px; display: flex; flex-direction: column; }
.awsbar { height: 51px; flex: none; display: flex; align-items: center; background: #161d26; border-bottom: 1px solid #424650; color: #fff; font-size: 15px; font-weight: 500; letter-spacing: 0; }
.logo { width: 82px; padding-left: 21px; height: 30px; }
.logo span { display: block; width: 39px; font-size: 21px; font-weight: 600; line-height: 16px; letter-spacing: -0.500px; text-align: center; }
.logo svg { width: 39px; height: 12px; }
.vsep { width: 1px; height: 30px; background: #424650; }
.grid9 { width: 20px; height: 20px; margin: 0 21px 0 19px; }
.gsearch { width: 675px; height: 38px; border: 2px solid #656871; border-radius: 9px; background: #0f141a; display: flex; align-items: center; padding: 0 10px 0 13px; color: #a4a4ad; font-size: 17.500px; font-weight: 400; letter-spacing: -0.240px; }
.gsearch svg { width: 20px; height: 20px; margin-right: 11px; color: #b4b4bb; }
.gsearch em { font-style: italic; flex: 1; }
.gsearch span { letter-spacing: 0.300px; }
.aws-icons { display: flex; align-items: center; margin-left: auto; color: #ebebf0; }
.aws-icons span { width: 61px; display: flex; justify-content: center; }
.aws-icons svg { width: 20px; height: 20px; }
.region, .account { display: flex; align-items: center; white-space: nowrap; color: #ebebf0; }
.region { width: 239px; padding-left: 20px; gap: 5px; }
.account { width: 453px; padding-left: 20px; gap: 5px; letter-spacing: 0.060px; }
.region svg, .account svg { width: 16px; height: 16px; }

.crumbs { height: 53px; flex: none; display: flex; align-items: center; border-bottom: 1px solid #c6c6cd; padding: 0 0 1px 20px; white-space: nowrap; }
.burger { width: 38px; height: 38px; border-radius: 50%; background: #006ce0; display: flex; align-items: center; justify-content: center; margin-right: 15px; }
.burger svg { width: 18px; height: 16px; }
.link { color: #006ce0; text-decoration: underline; text-decoration-thickness: 1.300px; text-underline-offset: 4px; text-decoration-skip-ink: none; }
.chev { width: 18px; height: 18px; margin: 0 11px; color: #8c8c94; }
.bucket-name { letter-spacing: -0.030px; }
.crumbs b { font-weight: 700; color: #656871; letter-spacing: -0.440px; }
.crumb-tools { margin-left: auto; display: flex; align-items: center; color: #424650; }
.crumb-tools i { width: 1px; height: 30px; background: #c6c6cd; margin-right: 19px; }
.crumb-tools svg { width: 20px; height: 20px; margin-right: 27px; }
.crumb-tools svg:last-child { margin-right: 29px; }

.body { height: 735px; flex: none; display: flex; }
.side { width: 351px; display: flex; border-right: 1px solid #c6c6cd; background: #fff; overflow: hidden; }
.side-list { width: 331px; padding: 20px 20px 0 35px; color: #424650; white-space: nowrap; letter-spacing: -0.200px; }
.side-head { display: flex; align-items: center; justify-content: space-between; height: 36px; color: #0f141a; padding-bottom: 1px; }
.side-head h2 { font-size: 22.500px; font-weight: 700; letter-spacing: -0.500px; }
.side-head svg { width: 18px; height: 18px; margin-right: 8px; color: #424650; }
.side ul { margin-top: 21.500px; }
.side li { margin-bottom: 10px; }
.side li.on { color: #006ce0; font-weight: 700; letter-spacing: -0.640px; }
.side hr { border: 0; height: 1px; background: #c6c6cd; margin: 30px 0 30px -10px; width: 286px; }
.side h3 { display: flex; align-items: center; font-size: 20px; font-weight: 700; letter-spacing: -0.650px; color: #0f141a; height: 25px; margin: 20px 0 0 -25px; }
.side h3 svg { width: 17px; height: 17px; margin-right: 8px; }
.side ul.ul3 { margin-top: 11px; }
.sbar { width: 19px; background: #fcfcfc; display: flex; flex-direction: column; align-items: center; padding: 6px 0 5px; }
.sbar svg { width: 13px; height: 10px; }
.sbar i { width: 11px; border-radius: 6px; background: #8b8b8b; margin-top: 7px; margin-bottom: auto; }
.side-thumb { height: 532px; }
.page-thumb { height: 830px; }

.main { flex: 1; background: #fcfcfc; padding: 30px 30px 0 30px; }
.title { display: flex; justify-content: space-between; align-items: center; height: 39px; }
h1 { font-size: 30px; font-weight: 700; letter-spacing: -1.230px; line-height: 38px; white-space: nowrap; }
.btn { height: 39px; border: 2px solid #006ce0; border-radius: 20px; background: #fff; color: #006ce0; font-weight: 700; letter-spacing: -0.550px; display: flex; align-items: center; justify-content: center; gap: 10px; flex: none; white-space: nowrap; padding-bottom: 1px; }
.btn svg { width: 20px; height: 20px; margin-top: 1px; }
.btn.wide { letter-spacing: -0.250px; }
.lead svg { margin-left: -5px; }
.trail svg { margin-right: -5px; }
.btn.off { border-color: #b4b4bb; color: #8c8c94; }
.btn.primary { background: #f90; border-color: #f90; color: #0f141a; }
.round { width: 39px; }
.w108 { width: 108px; }
.w124 { width: 124px; }
.w139 { width: 139px; }
.w141 { width: 141px; }
.w159 { width: 159px; }
.w163 { width: 163px; }
.w180 { width: 180px; }
.tabs { display: flex; align-items: center; height: 62px; margin: 16px 0 20px; border-bottom: 1px solid #c6c6cd; padding-left: 2px; font-size: 20px; font-weight: 700; letter-spacing: -0.600px; color: #424650; }
.tabs i { width: 1px; height: 34px; background: #c6c6cd; margin-bottom: -5px; }
.t { height: 61px; padding: 4px 25px 0 26px; line-height: 58px; border-bottom: 4px solid transparent; }
.t.on { width: 120px; padding-left: 24px; color: #006ce0; border-color: #006ce0; border-radius: 2px; }

.card { height: 368px; border: 1px solid #c6c6cd; border-radius: 20px; background: #fff; padding: 16px 25px 0; }
.actions { display: flex; align-items: center; gap: 10px; height: 39px; }
.actions h2 { font-size: 25px; font-weight: 700; letter-spacing: -1px; width: 132px; white-space: nowrap; padding-bottom: 2px; }
.actions small { font-size: 25px; font-weight: 400; color: #656871; letter-spacing: -0.200px; }
.desc { margin-top: 4px; color: #424650; white-space: nowrap; letter-spacing: -0.150px; }
.desc svg { display: inline-block; width: 20px; height: 20px; vertical-align: -4px; color: #006ce0; }
.filter { display: flex; justify-content: space-between; align-items: center; height: 40px; margin-top: 11px; }
.find { width: 512px; height: 40px; border: 1.500px solid #8c8c94; border-radius: 10px; display: flex; align-items: center; padding-left: 14px; color: #656871; }
.find svg { width: 20px; height: 20px; margin-right: 11px; }
.find em { font-style: italic; letter-spacing: -0.080px; }
.pager { display: flex; align-items: center; color: #b4b4bb; }
.pager > svg { width: 18px; height: 18px; }
.pager b { width: 52px; text-align: center; color: #0f141a; }
.pager i { width: 1px; height: 39px; background: #c6c6cd; margin: 0 17px 0 14px; }
.pager .prefs { width: 20px; height: 20px; margin-right: 7px; color: #424650; }

.tr { display: grid; grid-template-columns: 50px 278px 277.500px 277.500px 277px 278px; align-items: center; }
.th { height: 47px; border-bottom: 1px solid #c6c6cd; color: #424650; font-weight: 700; letter-spacing: -0.550px; padding-top: 10px; }
.r1 { height: 115px; border-bottom: 1px solid #ebebf0; }
.r2 { height: 36px; }
.c { padding-left: 20px; padding-bottom: 2px; white-space: nowrap; }
.th .c { display: flex; align-items: center; padding-bottom: 0; }
.th .c > svg { width: 17px; height: 17px; margin-left: auto; margin-right: 15px; }
.th .c::after { content: ""; width: 2px; height: 22px; background: #8c8c94; }
.th .chk::after { background: #c6c6cd; margin-left: 12px; }
.th .c.last::after { display: none; }
.th .c.last > svg { margin-right: 9px; }
.sorted { color: #0f141a; }
.c.chk { padding-left: 16px; padding-bottom: 0; }
.r2 .c { padding-bottom: 0; }
.r2 .c.chk { padding-bottom: 2px; }
.box { display: block; width: 20px; height: 20px; border: 1.500px solid #8c8c94; border-radius: 4px; background: #fff; }
.ico { display: inline-block; width: 20px; height: 20px; vertical-align: -4px; margin-right: 10px; }
.name { letter-spacing: -0.040px; }
.hash { letter-spacing: 0.140px; }
.year { letter-spacing: 0.100px; }
.date { letter-spacing: 0.150px; }
.num { text-align: right; padding-right: 18px; letter-spacing: 0.120px; }

.foot { height: 37px; flex: none; display: flex; align-items: center; background: #161d26; border-top: 1px solid #424650; color: #ebebf0; font-size: 15px; font-weight: 500; letter-spacing: -0.100px; padding-left: 20px; white-space: nowrap; }
.foot svg { width: 20px; height: 20px; margin-right: 6px; }
.f1 { width: 105px; }
.copyr { margin-left: auto; width: 381px; font-weight: 400; color: #c6c6cd; letter-spacing: -0.120px; }
.f2 { width: 80px; }
.f3 { width: 72px; letter-spacing: -0.300px; }
.f4 { width: 149px; letter-spacing: -0.350px; }

/* Taskbar */
.taskbar { height: 60px; flex: none; display: flex; align-items: center; background: #dcdbd9; border-top: 1px solid #b9b8b6; color: #1c1c1c; }
.widgets { width: 299px; padding-left: 28px; position: relative; }
.widgets svg { width: 26px; height: 26px; }
.widgets em { position: absolute; left: 40px; top: -9px; width: 20px; height: 20px; border-radius: 50%; background: #c42b1c; color: #fff; font-size: 14px; line-height: 20px; text-align: center; letter-spacing: 0; }
.win { width: 29px; height: 29px; }
.wsearch { width: 273px; height: 39px; margin: 0 3px 0 18px; border: 1px solid #c8c7c5; border-radius: 20px; background: #f4f4f4; display: flex; align-items: center; padding-left: 13px; color: #555; }
.mag { width: 20px; height: 20px; margin-right: 11px; }
.wsearch span { flex: 1; letter-spacing: -0.400px; }
.bike { width: 52px; height: 34px; margin-right: 5px; }
.pins { display: flex; align-items: center; height: 59px; }
.pins > span { width: 55.080px; height: 59px; display: flex; align-items: center; justify-content: center; position: relative; }
.pins > span > svg { width: 31px; height: 31px; }
.pins b { position: absolute; left: 13px; top: 22px; width: 15px; color: #fff; font-size: 12.500px; line-height: 15px; text-align: center; letter-spacing: 0; }
.teams em { position: absolute; left: 29px; top: 8px; }
.teams em svg { width: 20px; height: 20px; }
.copilot em { position: absolute; left: 21px; top: 35px; width: 21px; height: 9px; background: #000; color: #fff; font-size: 7px; font-weight: 700; line-height: 9px; text-align: center; letter-spacing: 0; border-radius: 1px; }
.run::after { content: ""; position: absolute; left: 23.500px; top: 49px; width: 8px; height: 4px; border-radius: 2px; background: #7d7c7b; }
.pins > .current::before { content: ""; position: absolute; left: 3px; top: 5px; width: 48px; height: 49px; border-radius: 5px; background: #efefee; border: 1px solid #d2d1cf; border-right: 4px solid #e6e5e4; }
.pins > .current svg { position: relative; width: 26px; height: 30px; }
.current::after { left: 17px; width: 20px; background: #0078d4; }
.tray { margin-left: auto; display: flex; align-items: center; padding-right: 15px; font-size: 15px; line-height: 19.500px; }
.tray svg { width: 20px; height: 20px; }
.s40, .s30 { display: flex; justify-content: center; width: 40px; }
.s30 { width: 30px; }
.lang { width: 60px; padding-right: 4px; text-align: center; }
.clock { width: 76px; text-align: right; }
```
